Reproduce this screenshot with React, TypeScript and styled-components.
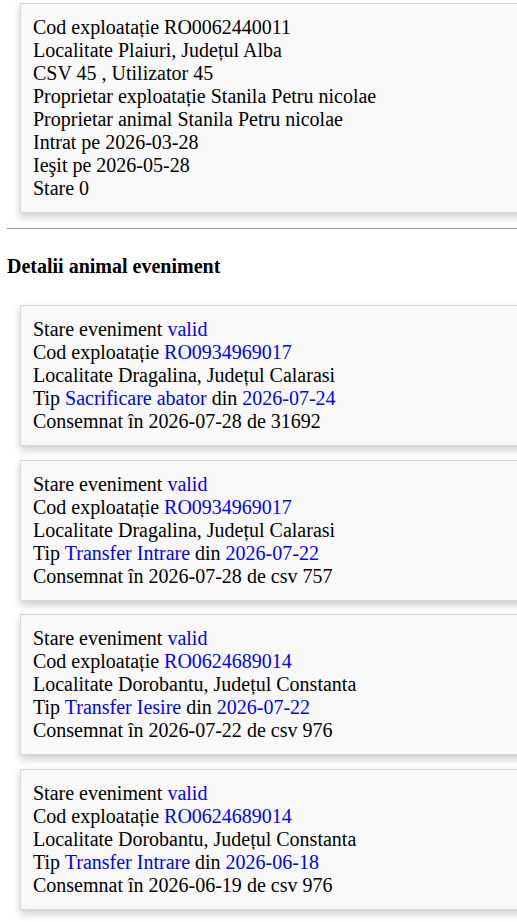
import React from 'react';
import styled, { createGlobalStyle } from 'styled-components';

const GlobalStyle = createGlobalStyle`
  html, body {
    margin: 0;
    padding: 0;
    background: #fff;
    overflow-x: hidden;
  }
  body {
    font-family: "Liberation Serif", "Times New Roman", serif;
    font-size: 20px;
    line-height: 23px;
    color: #000;
  }
`;

const Page = styled.div`
  padding: 3px 0 0 7px;
`;

const Card = styled.div`
  width: 560px;
  margin: 0 0 13.5px 13px;
  padding: 12px;
  background: #f9f9f9;
  border: 1px solid #d8d8d8;
  box-shadow: 0 4px 8px rgba(0, 0, 0, 0.2);
`;

const Line = styled.div`
  white-space: nowrap;
`;

const Value = styled.span`
  color: #0000ff;
`;

const Rule = styled.hr`
  margin: 15px 0 0 0;
  border: none;
  border-top: 1px solid #a0a0a0;
  height: 0;
`;

const Heading = styled.h4`
  margin: 26px 0 27px 0;
  font-size: 20px;
  line-height: 23px;
  font-weight: bold;
`;

type Event = {
  cod: string;
  localitate: string;
  tip: string;
  data: string;
  consemnat: string;
  de: string;
};

const events: Event[] = [
  { cod: 'RO0934969017', localitate: 'Dragalina, Județul Calarasi', tip: 'Sacrificare abator', data: '2026-07-24', consemnat: '2026-07-28', de: '31692' },
  { cod: 'RO0934969017', localitate: 'Dragalina, Județul Calarasi', tip: 'Transfer Intrare', data: '2026-07-22', consemnat: '2026-07-28', de: 'csv 757' },
  { cod: 'RO0624689014', localitate: 'Dorobantu, Județul Constanta', tip: 'Transfer Iesire', data: '2026-07-22', consemnat: '2026-07-22', de: 'csv 976' },
  { cod: 'RO0624689014', localitate: 'Dorobantu, Județul Constanta', tip: 'Transfer Intrare', data: '2026-06-18', consemnat: '2026-06-19', de: 'csv 976' },
];

export default function App() {
  return (
    <Page>
      <GlobalStyle />
      <Card>
        <Line>Cod exploatație RO0062440011</Line>
        <Line>Localitate Plaiuri, Județul Alba</Line>
        <Line>CSV 45 , Utilizator 45</Line>
        <Line>Proprietar exploatație Stanila Petru nicolae</Line>
        <Line>Proprietar animal Stanila Petru nicolae</Line>
        <Line>Intrat pe 2026-03-28</Line>
        <Line>Ieşit pe 2026-05-28</Line>
        <Line>Stare 0</Line>
      </Card>
      <Rule />
      <Heading>Detalii animal eveniment</Heading>
      {events.map((ev, i) => (
        <Card key={i}>
          <Line>
            Stare eveniment <Value>valid</Value>
          </Line>
          <Line>
            Cod exploatație <Value>{ev.cod}</Value>
          </Line>
          <Line>Localitate {ev.localitate}</Line>
          <Line>
            Tip <Value>{ev.tip}</Value> din <Value>{ev.data}</Value>
          </Line>
          <Line>
            Consemnat în {ev.consemnat} de {ev.de}
          </Line>
        </Card>
      ))}
    </Page>
  );
}
